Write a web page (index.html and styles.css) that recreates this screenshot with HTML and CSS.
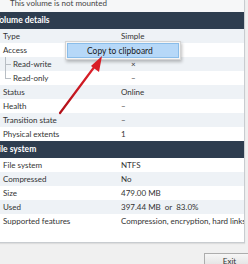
FILE: index.html
```html
<!DOCTYPE html>
<html>
<head>
<meta charset="utf-8">
<link rel="stylesheet" href="styles.css">
</head>
<body>
<div class="window">
  <div class="panel">
    <div class="notice">This volume is not mounted</div>
    <div class="section">Volume details</div>
    <div class="row"><span class="label">Type</span><span class="value">Simple</span></div>
    <div class="row"><span class="label">Access</span><span class="value"></span></div>
    <div class="row"><span class="label sub first">Read-write</span><span class="value">×</span></div>
    <div class="row"><span class="label sub last">Read-only</span><span class="value">–</span></div>
    <div class="row"><span class="label">Status</span><span class="value">Online</span></div>
    <div class="row"><span class="label">Health</span><span class="value">–</span></div>
    <div class="row"><span class="label">Transition state</span><span class="value">–</span></div>
    <div class="row"><span class="label">Physical extents</span><span class="value">1</span></div>
    <div class="section">File system</div>
    <div class="row"><span class="label">File system</span><span class="value">NTFS</span></div>
    <div class="row"><span class="label">Compressed</span><span class="value">No</span></div>
    <div class="row"><span class="label">Size</span><span class="value">479.00 MB</span></div>
    <div class="row"><span class="label">Used</span><span class="value">397.44 MB&nbsp;&nbsp;or&nbsp;&nbsp;83.0%</span></div>
    <div class="row"><span class="label">Supported features</span><span class="value">Compression, encryption, hard links (sparse files)</span></div>
    <div class="spacer"></div>
  </div>
  <div class="footer"><button class="exit">Exit</button></div>
</div>
<div class="menu"><div class="item">Copy to clipboard</div></div>
<svg class="arrow" width="248" height="264" viewBox="0 0 248 264">
  <defs>
    <linearGradient id="g" x1="0" y1="1" x2="1" y2="0">
      <stop offset="0" stop-color="#b01018"/>
      <stop offset="1" stop-color="#e0202a"/>
    </linearGradient>
  </defs>
  <line x1="60" y1="113" x2="95" y2="66" stroke="url(#g)" stroke-width="2.2" stroke-linecap="round"/>
  <polygon points="102,56 99,72 91,66" fill="#d81c24"/>
</svg>
</body>
</html>
```

FILE: styles.css
```css
html, body {
  margin: 0;
  padding: 0;
  width: 248px;
  height: 264px;
  overflow: hidden;
  background: #f0f0f0;
  font-family: Lato, "Open Sans", sans-serif;
  font-size: 8px;
  color: #333;
}
.window {
  margin-left: -7px;
  width: 255px;
  display: flex;
  flex-direction: column;
}
.panel {
  width: 251px;
  background: #fff;
  border-right: 1px solid #c8ccd0;
  border-bottom: 1px solid #c8ccd0;
  box-shadow: 0 1px 1px rgba(0,0,0,0.08);
}
.notice {
  height: 12px;
  line-height: 6px;
  padding-left: 17px;
  background: #f6f7f8;
  color: #444;
  overflow: hidden;
}
.section {
  height: 17px;
  line-height: 17px;
  background: #2e3d4f;
  color: #fff;
  font-weight: 700;
  font-size: 8.5px;
  padding-left: 1px;
}
.row {
  height: 14px;
  line-height: 14px;
  display: flex;
  white-space: nowrap;
  overflow: hidden;
}
.row:nth-child(odd) { background: #eef2f6; }
.row:nth-child(even) { background: #fff; }
.label {
  width: 118px;
  padding-left: 10px;
  flex: none;
  position: relative;
}
.label.sub { padding-left: 20px; }
.label.sub::before {
  content: "";
  position: absolute;
  left: 12px;
  top: 0;
  width: 5px;
  height: 7px;
  border-left: 1px solid #b8bec4;
  border-bottom: 1px solid #b8bec4;
}
.label.first::after {
  content: "";
  position: absolute;
  left: 12px;
  top: 7px;
  height: 7px;
  border-left: 1px solid #b8bec4;
}
.label.last::before { top: -1px; height: 8px; }
.value { flex: none; }
.spacer { height: 14px; background: #fff; }
.footer {
  height: 22px;
  display: flex;
  justify-content: flex-end;
  align-items: flex-end;
}
.exit {
  width: 51px;
  height: 12px;
  margin-right: -7px;
  border: 1px solid #adadad;
  border-bottom: none;
  background: linear-gradient(#f6f6f6, #e4e4e4);
  font-family: Lato, "Open Sans", sans-serif;
  font-size: 8px;
  color: #333;
  padding: 3px 0 0 0;
  line-height: 8px;
  text-align: center;
}
.menu {
  position: absolute;
  left: 65px;
  top: 41px;
  width: 116px;
  height: 19px;
  background: #f5f5f5;
  border: 1px solid #d4d4d4;
  box-shadow: 1px 2px 3px rgba(0,0,0,0.25);
  box-sizing: border-box;
  padding: 1px;
}
.item {
  height: 15px;
  line-height: 14px;
  background: #b6d8f8;
  border: 1px solid #8abde9;
  box-sizing: border-box;
  padding-left: 19px;
  font-size: 8.5px;
  color: #1a1a1a;
}
.arrow {
  position: absolute;
  left: 0;
  top: 0;
  pointer-events: none;
}
```
